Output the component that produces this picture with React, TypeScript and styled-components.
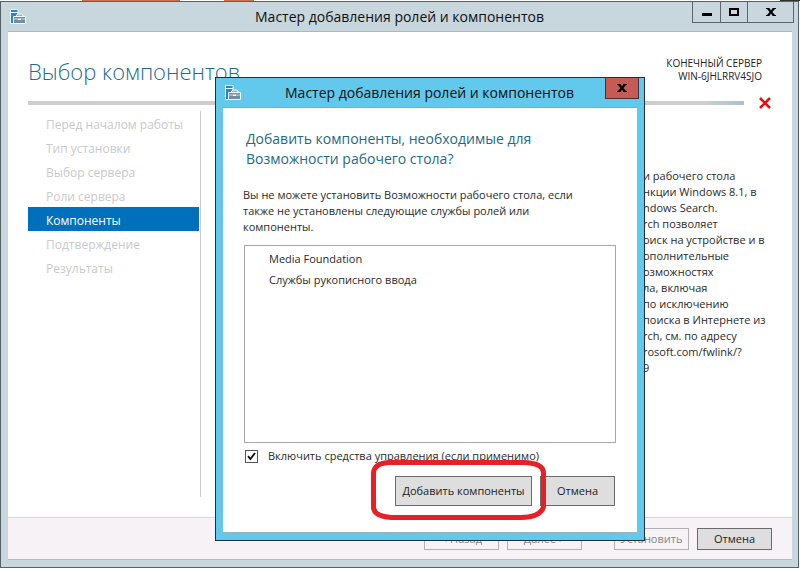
import React from 'react';
import styled, { createGlobalStyle, css } from 'styled-components';

const GlobalStyle = createGlobalStyle`
  * { box-sizing: border-box; }
  body { margin: 0; background: #fff; }
  body, button, input { font-family: "Open Sans", "Noto Sans", sans-serif; }
  h1, h2, p, ul, ol { margin: 0; padding: 0; font-weight: 400; }
  ul, ol { list-style: none; }
`;

const Desktop = styled.div`
  position: relative;
  display: flex;
  flex-direction: column;
  min-height: 100vh;
  font-size: 11px;
  line-height: 16px;
  color: #2a2a2a;
`;

const Backdrop = styled.div`
  flex: none;
  height: 1px;
  background: linear-gradient(
    to right,
    #fff 82px, #c8714c 82px, #c8714c 180px,
    #fff 180px, #fff 224px, #c8714c 224px, #c8714c 254px,
    #fff 254px, #fff 780px, #333 780px
  );
`;

const Window = styled.div`
  flex: 1;
  display: flex;
  flex-direction: column;
  margin-right: 1px;
  padding: 0 6px 7px 7px;
  border: 1px solid #566165;
  background: #c7d7dd;
`;

const TitleBar = styled.header<{ $height: number }>`
  flex: none;
  display: flex;
  align-items: flex-start;
  height: ${(p) => p.$height}px;
`;

const TitleIcon = styled.svg`
  flex: none;
  width: 16px;
  height: 16px;
  margin: 7px 0 0 2px;
`;

const TitleText = styled.h2<{ $shift: number }>`
  flex: 1;
  padding-left: ${(p) => p.$shift}px;
  text-align: center;
  font-size: 14px;
  line-height: 29px;
  color: #101010;
`;

const WindowControls = styled.div`
  display: flex;
  height: 21px;
  border: 1px solid #5c686c;
  border-top: 0;
  margin-right: -2px;
`;

const ControlButton = styled.button<{ $width: number; $danger?: boolean }>`
  display: flex;
  align-items: center;
  justify-content: center;
  width: ${(p) => p.$width}px;
  padding: 0;
  border: 0;
  background: transparent;
  & + & { border-left: 1px solid #5c686c; }
  ${(p) => p.$danger && css`
    height: 21px;
    margin-right: -2px;
    border: 1px solid #4a2f35;
    border-top: 0;
    background: #c65a54;
  `}
`;

const Client = styled.main`
  flex: 1;
  display: flex;
  flex-direction: column;
  border-top: 1px solid #a9b7c1;
  border-bottom: 1px solid #b0bdc2;
  background: #fff;
`;

const PageHeader = styled.div`
  display: flex;
  justify-content: space-between;
  padding: 24px 30px 0 20px;
`;

const PageTitle = styled.h1`
  font-size: 22px;
  line-height: 30px;
  font-weight: 300;
  color: #1f6a90;
`;

const Server = styled.p`
  padding-top: 1px;
  font-size: 10px;
  line-height: 13px;
  text-align: right;
  color: #222;
`;

const ProgressRow = styled.div`
  display: flex;
  align-items: center;
  gap: 14px;
  height: 12px;
  margin: 11px 20px 0;
`;

const ProgressLine = styled.div`
  flex: 1;
  height: 4px;
  background: linear-gradient(to right, #cdcdcd calc(100% - 36px), #a9c3c9);
`;

const ErrorIcon = styled.svg`
  width: 14px;
  height: 12px;
`;

const Body = styled.div`
  flex: 1;
  display: flex;
  padding: 2px 0 20px 20px;
`;

const Steps = styled.ol`
  width: 173px;
  padding-right: 1px;
  border-right: 1px solid #c9c9c9;
`;

const Step = styled.li<{ $current?: boolean }>`
  padding: 3px 0 0 18px;
  font-size: 12px;
  line-height: 21px;
  color: ${(p) => (p.$current ? '#fff' : '#c9c9c9')};
  background: ${(p) => (p.$current ? '#0070bc' : 'transparent')};
`;

const Description = styled.p`
  margin-left: auto;
  width: 149px;
  padding-top: 57px;
  white-space: pre-line;
`;

const Footer = styled.footer`
  display: flex;
  justify-content: flex-end;
  gap: 8px;
  padding: 10px 20px 9px;
  border-top: 1px solid #d8d5da;
  background: #f6f2f6;
`;

const Button = styled.button<{ $height: number; $gap?: boolean }>`
  min-width: 75px;
  height: ${(p) => p.$height}px;
  margin-left: ${(p) => (p.$gap ? 24 : 0)}px;
  padding: 0 5px;
  border: 1px solid #6c6a6e;
  background: #dedede;
  font-size: 11px;
  line-height: 16px;
  color: #1c1c1c;
  &:disabled {
    border-color: #b3b0b4;
    background: #f6f3f6;
    color: #868686;
  }
`;

const Overlay = styled.div`
  position: absolute;
  inset: 77px 155px auto 215px;
`;

const Dialog = styled.section`
  padding: 0 7px 7px;
  border: 1px solid #1d2f3a;
  background: #63c9ec;
`;

const DialogBody = styled.div`
  display: flex;
  flex-direction: column;
  padding: 21px 21px 26px;
  border-top: 1px solid #6fb1ca;
  border-bottom: 1px solid #9cb4bf;
  background: #fff;
`;

const DialogTitle = styled.h1`
  padding-left: 2px;
  font-size: 14px;
  line-height: 20px;
  color: #1f6a85;
`;

const Message = styled.p`
  margin: 18px 0 10px -1px;
`;

const FeatureList = styled.ul`
  height: 198px;
  padding: 2px 24px;
  border: 1px solid #a5a5a5;
  line-height: 21px;
`;

const CheckRow = styled.label`
  display: flex;
  align-items: center;
  gap: 10px;
  margin-top: 5px;
`;

const CheckBox = styled.input`
  appearance: none;
  width: 13px;
  height: 13px;
  margin: 0 0 0 1px;
  border: 1px solid #555;
  background: #fff;
  &:checked {
    background: #fff url("data:image/svg+xml,%3Csvg xmlns='http://www.w3.org/2000/svg' viewBox='0 0 11 11'%3E%3Cpath d='M2 5.2 4.4 8 9 2' fill='none' stroke='%23111' stroke-width='1.9'/%3E%3C/svg%3E");
  }
`;

const DialogActions = styled.div`
  display: flex;
  justify-content: flex-end;
  gap: 8px;
  margin-top: 12px;
  padding-right: 1px;
`;

const Highlighted = styled.div`
  position: relative;
  display: flex;
  & > button { width: 137px; }
`;

const Marker = styled.svg`
  position: absolute;
  left: -24px;
  top: -16px;
  width: 175px;
  height: 60px;
  pointer-events: none;
  z-index: 1;
`;

const ServerIcon = () => (
  <TitleIcon viewBox="0 0 16 16" aria-hidden="true">
    <path d="M.5.5h7.500v14H.5z" fill="#2486cf" stroke="#f4fafc" />
    <path d="M1 3.500h7" stroke="#f4fafc" />
    <path d="M6.500 8V6L8 5h3.500L13 6v2" fill="#8fb6cc" stroke="#f4fafc" />
    <path d="M3.500 7.500h12v7h-12z" fill="#6f8ea3" stroke="#f4fafc" />
    <path d="M4 10h4m3 0h4" stroke="#c9d9e2" />
    <path d="M8 9.500h3v1.500H8z" fill="#f4fafc" />
  </TitleIcon>
);

const CloseGlyph = () => (
  <svg width="10" height="8" viewBox="0 0 10 8" aria-hidden="true">
    <path d="M0 0h3.4L5 2.4 6.6 0H10v1H9L6.4 4 9 7h1v1H6.6L5 5.6 3.4 8H0V7h1l2.6-3L1 1H0z" fill="#000" />
  </svg>
);

const steps = [
  'Перед началом работы',
  'Тип установки',
  'Выбор сервера',
  'Роли сервера',
  'Компоненты',
  'Подтверждение',
  'Результаты',
];

const description = [
  'и рабочего стола',
  'нкции Windows 8.1, в',
  'ndows Search.',
  'rch позволяет',
  'оиск на устройстве и в',
  'ополнительные',
  'озможностях',
  'ла, включая',
  'по исключению',
  'поиска в Интернете из',
  'rch, см. по адресу',
  'rosoft.com/fwlink/?',
  '9',
].join('\n');

const WizardDialog = () => (
  <Overlay>
    <Dialog role="dialog" aria-labelledby="dialog-title">
      <TitleBar $height={29}>
        <ServerIcon />
        <TitleText id="dialog-title" $shift={13}>Мастер добавления ролей и компонентов</TitleText>
        <ControlButton $width={34} $danger aria-label="Закрыть"><CloseGlyph /></ControlButton>
      </TitleBar>
      <DialogBody>
        <DialogTitle>
          Добавить компоненты, необходимые для<br />Возможности рабочего стола?
        </DialogTitle>
        <Message>
          Вы не можете установить Возможности рабочего стола, если<br />
          также не установлены следующие службы ролей или<br />компоненты.
        </Message>
        <FeatureList>
          <li>Media Foundation</li>
          <li>Службы рукописного ввода</li>
        </FeatureList>
        <CheckRow>
          <CheckBox type="checkbox" defaultChecked />
          Включить средства управления (если применимо)
        </CheckRow>
        <DialogActions>
          <Highlighted>
            <Button $height={30}>Добавить компоненты</Button>
            <Marker viewBox="0 0 175 60" aria-hidden="true">
              <path
                d="M19 2.5H152Q172.500 3 172.500 13V47Q169 57.500 150 57.500H20Q2.500 56 2.500 47V13Q3 3 19 2.500Z"
                fill="none" stroke="#e52027" strokeWidth="5"
              />
            </Marker>
          </Highlighted>
          <Button $height={30}>Отмена</Button>
        </DialogActions>
      </DialogBody>
    </Dialog>
  </Overlay>
);

export default function App() {
  return (
    <>
      <GlobalStyle />
      <Desktop>
        <Backdrop />
        <Window>
          <TitleBar $height={29}>
            <ServerIcon />
            <TitleText $shift={81}>Мастер добавления ролей и компонентов</TitleText>
            <WindowControls>
              <ControlButton $width={27} aria-label="Свернуть">
                <svg width="10" height="8" aria-hidden="true"><path d="M0 5h10v3H0z" /></svg>
              </ControlButton>
              <ControlButton $width={27} aria-label="Развернуть">
                <svg width="10" height="8" aria-hidden="true">
                  <path d="M1 1h8v6H1z" fill="none" stroke="#000" strokeWidth="2" />
                </svg>
              </ControlButton>
              <ControlButton $width={46} aria-label="Закрыть"><CloseGlyph /></ControlButton>
            </WindowControls>
          </TitleBar>
          <Client>
            <PageHeader>
              <PageTitle>Выбор компонентов</PageTitle>
              <Server>КОНЕЧНЫЙ СЕРВЕР<br />WIN-6JHLRRV4SJO</Server>
            </PageHeader>
            <ProgressRow>
              <ProgressLine />
              <ErrorIcon viewBox="0 0 14 12" aria-hidden="true">
                <path d="M2 1 12 11M12 1 2 11" stroke="#e3100f" strokeWidth="2.6" />
              </ErrorIcon>
            </ProgressRow>
            <Body>
              <Steps>
                {steps.map((s) => (
                  <Step key={s} $current={s === 'Компоненты'}>{s}</Step>
                ))}
              </Steps>
              <Description>{description}</Description>
            </Body>
            <Footer>
              <Button $height={22} disabled>&lt; Назад</Button>
              <Button $height={22} disabled>Далее &gt;</Button>
              <Button $height={22} $gap disabled>Установить</Button>
              <Button $height={22}>Отмена</Button>
            </Footer>
          </Client>
        </Window>
        <WizardDialog />
      </Desktop>
    </>
  );
}
